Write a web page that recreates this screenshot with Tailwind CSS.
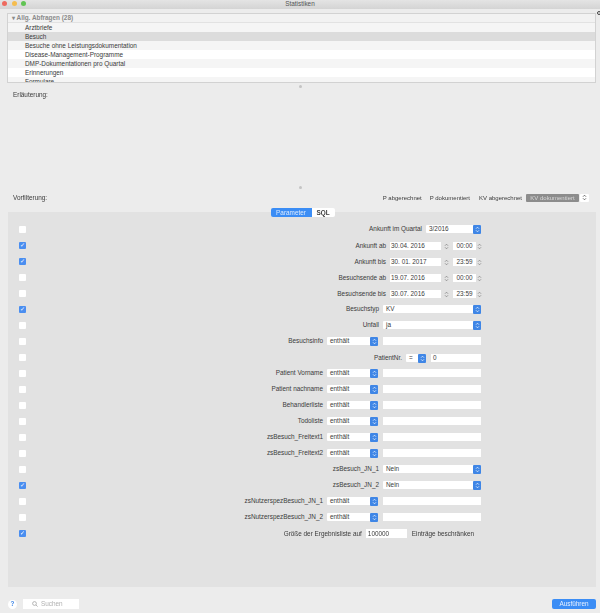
<!DOCTYPE html>
<html lang="de">
  <head>
    <meta charset="UTF-8" />
    <title>Statistiken</title>
    <script src="https://cdn.jsdelivr.net/npm/@tailwindcss/browser@4"></script>
  </head>
  <body class="bg-[#ececec] font-['Liberation_Sans',sans-serif] text-[6.4px] leading-[8px] text-[#3a3a3a]">
    <div class="w-[600px] h-[613px] flex flex-col overflow-hidden relative blur-[0.3px]">
      <!-- title bar -->
      <div class="h-[9px] pb-[2px] bg-gradient-to-b from-[#e4e4e4] to-[#d4d4d4] flex items-center pl-[2px]">
        <div class="flex gap-[4.5px]">
          <span class="w-[5px] h-[5px] rounded-full bg-[#ee6a5f]"></span>
          <span class="w-[5px] h-[5px] rounded-full bg-[#f5bd4f]"></span>
          <span class="w-[5px] h-[5px] rounded-full bg-[#61c454]"></span>
        </div>
        <span class="flex-1 text-center pr-[26px] text-[#555]">Statistiken</span>
      </div>

      <!-- query list -->
      <div class="ml-[7px] mr-[4px] mt-[4px] h-[70px] border border-[#d2d2d2] bg-white overflow-hidden">
        <div class="h-[9px] pl-[4px] flex items-center font-bold text-[#8a8a8a] bg-[#f2f2f2] border-b border-[#e2e2e2]">▾ Allg. Abfragen (28)</div>
        <div class="h-[9px] pl-[17px] flex items-center bg-[#f5f5f5]">Arztbriefe</div>
        <div class="h-[9px] pl-[17px] flex items-center bg-[#dcdcdc]">Besuch</div>
        <div class="h-[9px] pl-[17px] flex items-center bg-[#f5f5f5]">Besuche ohne Leistungsdokumentation</div>
        <div class="h-[9px] pl-[17px] flex items-center">Disease-Management-Programme</div>
        <div class="h-[9px] pl-[17px] flex items-center bg-[#f5f5f5]">DMP-Dokumentationen pro Quartal</div>
        <div class="h-[9px] pl-[17px] flex items-center">Erinnerungen</div>
        <div class="h-[9px] pl-[17px] flex items-center bg-[#f5f5f5]">Formulare</div>
      </div>
      <span class="absolute left-[597px] top-[11px] w-[4px] h-[4px] rounded-full border border-[#444]"></span>
      <div class="h-[7px] flex items-center justify-center"><span class="w-[3px] h-[3px] rounded-full bg-[#c4c4c4]"></span></div>

      <!-- description -->
      <div class="h-[94px] pl-[13px] pt-[1px]">Erläuterung:</div>
      <div class="h-[7px] flex items-center justify-center"><span class="w-[3px] h-[3px] rounded-full bg-[#c4c4c4]"></span></div>

      <!-- prefilter -->
      <div class="h-[11px] mt-[1px] flex items-center pl-[13px] pr-[11px]">
        <span class="flex-1">Vorfilterung:</span>
        <span class="mr-[8px] text-[6px]">P abgerechnet</span>
        <span class="mr-[9px] text-[6px]">P dokumentiert</span>
        <span class="mr-[4px] text-[6px]">KV abgerechnet</span>
        <span class="w-[53px] h-[8px] rounded-[1px] bg-[#8c8c8c] text-[#d8d8d8] text-[6px] flex items-center justify-center">KV dokumentiert</span>
        <span class="w-[9px] ml-[1px] h-[8px] bg-white rounded-[1px] flex items-center justify-center">
          <svg width="5" height="7" viewBox="0 0 5 7" fill="none" stroke="#333" stroke-width="0.7"><path d="M1 2.7 2.5 1.2 4 2.7M1 4.3 2.5 5.8 4 4.3" /></svg>
        </span>
      </div>

      <!-- tabs -->
      <div class="h-[9px] mt-[5px] flex justify-center relative z-10 ml-[5px]">
        <span class="w-[41px] h-[9px] rounded-l-[2px] bg-[#3b8df5] text-[#dcebff] flex items-center justify-center">Parameter</span>
        <span class="w-[23px] h-[9px] rounded-r-[2px] bg-white font-bold flex items-center justify-center">SQL</span>
      </div>

      <!-- parameter panel, rows filled in below -->
      <div id="rows" class="ml-[8px] mr-[4px] -mt-[5px] h-[375px] bg-[#e2e2e2] pt-[9px] pl-[11px] pr-[115px] flex flex-col"></div>

      <!-- footer -->
      <div class="flex-1 flex items-center pt-[8px] pl-[8px] pr-[4px]">
        <span class="w-[9px] h-[9px] rounded-full bg-white text-[#3f86e6] font-bold flex items-center justify-center">?</span>
        <span class="ml-[6px] w-[56px] h-[10px] bg-white flex items-center pl-[9px] text-[#b0b0b0] gap-[3px]">
          <svg width="6" height="6" viewBox="0 0 6 6" fill="none" stroke="#999" stroke-width="0.7"><circle cx="2.5" cy="2.5" r="1.9" /><path d="M4 4l1.6 1.6" /></svg>
          Suchen
        </span>
        <span class="ml-auto w-[44px] h-[10px] rounded-[2px] bg-[#3b8df5] text-[#e8f1ff] flex items-center justify-center">Ausführen</span>
      </div>
    </div>

    <script>
      const arrows = '<svg width="5" height="7" viewBox="0 0 5 7" fill="none" stroke="currentColor" stroke-width="0.7"><path d="M1 2.7 2.5 1.2 4 2.7M1 4.3 2.5 5.8 4 4.3" /></svg>';
      const stepper = '<i class="w-[8px] h-[9px] bg-[#3f86e6] rounded-[1px] text-white flex items-center justify-center">' + arrows + "</i>";
      const grayArrows = '<span class="flex justify-center text-[#777]">' + arrows + "</span>";

      function select(width, text) {
        return '<span class="' + width + ' h-[8px] bg-white rounded-[1px] pl-[3px] flex items-center justify-between">' + text + stepper + "</span>";
      }

      function box(checked) {
        if (checked) {
          return '<span class="w-[7px] h-[7px] rounded-[1px] bg-[#4a8ef0] shrink-0 text-white text-[6px] leading-[7px] text-center">✓</span>';
        }
        return '<span class="w-[7px] h-[7px] rounded-[1px] bg-white shrink-0"></span>';
      }

      function dateRow(checked, label, date, time) {
        return '<div class="h-[16px] flex items-center shrink-0">' + box(checked) +
          '<div class="flex-1 flex items-center justify-end gap-[4px] -mr-[2px] mt-[2px]"><span>' + label + "</span>" +
          '<span class="w-[51px] h-[8px] bg-white pl-[1px] flex items-center">' + date + "</span>" +
          '<span class="w-[8px] -ml-[3px]">' + grayArrows + "</span>" +
          '<span class="w-[23px] h-[8px] bg-white text-center -ml-[1px]">' + time + "</span>" +
          '<span class="w-[7px] -ml-[4px]">' + grayArrows + "</span></div></div>";
      }

      function selectRow(checked, label, width, text) {
        return '<div class="h-[16px] flex items-center shrink-0">' + box(checked) +
          '<div class="flex-1 flex items-center justify-end gap-[4px]"><span>' + label + "</span>" + select(width, text) + "</div></div>";
      }

      function textRow(checked, label) {
        return '<div class="h-[16px] flex items-center shrink-0">' + box(checked) +
          '<div class="flex-1 flex items-center justify-end gap-[4px]"><span>' + label + "</span>" +
          '<span class="mr-[1px]">' + select("w-[51px]", "enthält") + "</span>" +
          '<span class="w-[98px] h-[8px] bg-white"></span></div></div>';
      }

      document.getElementById("rows").innerHTML = [
        selectRow(false, "Ankunft im Quartal", "w-[55px]", "3/2016"),
        dateRow(true, "Ankunft ab", "30.04. 2016", "00:00"),
        dateRow(true, "Ankunft bis", "30. 01. 2017", "23:59"),
        dateRow(false, "Besuchsende ab", "19.07. 2016", "00:00"),
        dateRow(false, "Besuchsende bis", "30.07. 2016", "23:59"),
        selectRow(true, "Besuchstyp", "w-[98px]", "KV"),
        selectRow(false, "Unfall", "w-[98px]", "ja"),
        textRow(false, "Besuchsinfo"),
        '<div class="h-[16px] flex items-center shrink-0">' + box(false) +
          '<div class="flex-1 flex items-center justify-end gap-[4px] mt-[2px]"><span>PatientNr.</span><span class="mr-[1px]">' + select("w-[20px]", "=") +
          '</span><span class="w-[50px] h-[8px] bg-white pl-[2px] flex items-center">0</span></div></div>',
        textRow(false, "Patient Vorname"),
        textRow(false, "Patient nachname"),
        textRow(false, "Behandlerliste"),
        textRow(false, "Todoliste"),
        textRow(false, "zsBesuch_Freitext1"),
        textRow(false, "zsBesuch_Freitext2"),
        selectRow(false, "zsBesuch_JN_1", "w-[98px]", "Nein"),
        selectRow(true, "zsBesuch_JN_2", "w-[98px]", "Nein"),
        textRow(false, "zsNutzerspezBesuch_JN_1"),
        textRow(false, "zsNutzerspezBesuch_JN_2"),
        '<div class="h-[17px] flex items-center shrink-0">' + box(true) +
          '<div class="flex-1 flex items-center justify-end gap-[4px] pr-[7px]"><span>Größe der Ergebnisliste auf</span>' +
          '<span class="w-[41px] h-[9px] bg-white pl-[2px] flex items-center">100000</span><span class="ml-[1px]">Einträge beschränken</span></div></div>',
      ].join("");
    </script>
  </body>
</html>
